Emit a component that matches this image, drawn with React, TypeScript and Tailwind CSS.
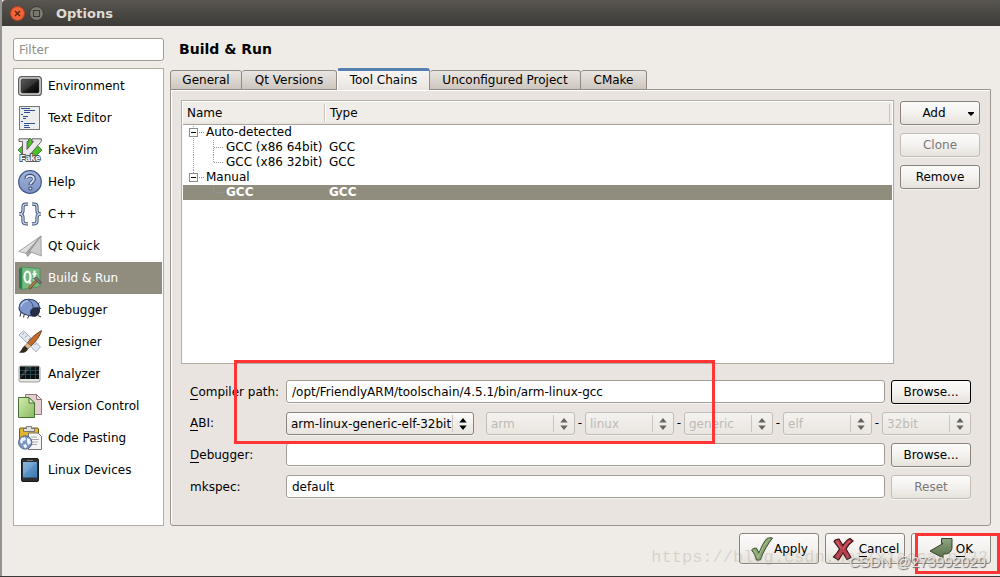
import React from "react";

const buttonBase =
  "flex items-center justify-center rounded-[3px] border bg-linear-to-b from-[#fcfbfa] via-[#f4f2ef] to-[#e6e2db] pt-px shadow-[0_1px_0_#f6f4f1]";
const fieldBase =
  "h-[23px] min-w-0 flex-1 self-start rounded-[3px] border border-[#a39d94] bg-white px-[5px] pt-px shadow-[0_1px_0_#f6f4f1] outline-none";

function EnvironmentIcon() {
  return (
    <svg width="24" height="24" viewBox="0 0 24 24">
      <defs>
        <linearGradient id="env" x1="0" y1="0" x2="1" y2="1">
          <stop offset="0" stopColor="#5a5a5a" />
          <stop offset=".5" stopColor="#343434" />
          <stop offset=".55" stopColor="#1c1c1c" />
          <stop offset="1" stopColor="#000" />
        </linearGradient>
      </defs>
      <rect x=".6" y="2.6" width="22.8" height="18.8" rx="3" fill="#d4d6d2" stroke="#5d5f5b" strokeWidth="1.2" />
      <rect x="3" y="5" width="18" height="14" rx="1.5" fill="url(#env)" stroke="#3a3a3a" strokeWidth=".6" />
    </svg>
  );
}

function TextEditorIcon() {
  return (
    <svg width="24" height="24" viewBox="0 0 24 24">
      <rect x="1.5" y=".5" width="20" height="23" fill="#eceeed" stroke="#777" />
      <path
        d="M3 2.5h9M6 4.500h11M6 6.500h6M3 8.500h2M5 10.500h5M5 12.500h3M3 15.500h2M6 17.500h11M6 19.500h5M6 21.500h6"
        stroke="#2f4f8f"
        strokeWidth="1"
      />
    </svg>
  );
}

function FakeVimIcon() {
  return (
    <svg width="24" height="24" viewBox="0 0 24 24">
      <path d="M12 0 24 12 12 24 0 12Z" fill="#4cc02a" stroke="#1e6a14" strokeWidth=".7" />
      <path
        d="M1 .8h9.500v2.700H9v8l6.500-8H14V.8h9.300v2.700L10 19H4.500V3.500H1Z"
        fill="#e9e9e9"
        stroke="#555"
        strokeWidth=".9"
      />
      <text
        x="12"
        y="22.500"
        textAnchor="middle"
        fontSize="9"
        fontWeight="bold"
        fontFamily="Liberation Sans, sans-serif"
        fill="#fff"
        stroke="#555"
        strokeWidth="1.800"
        paintOrder="stroke"
      >
        Fake
      </text>
    </svg>
  );
}

function HelpIcon() {
  return (
    <svg width="24" height="24" viewBox="0 0 24 24">
      <defs>
        <linearGradient id="help" x1="0" y1="0" x2="0" y2="1">
          <stop offset="0" stopColor="#a5b5d8" />
          <stop offset="1" stopColor="#7d92c4" />
        </linearGradient>
      </defs>
      <circle cx="12" cy="12" r="11.300" fill="url(#help)" stroke="#40588e" strokeWidth="1.200" />
      <path d="M8.200 8.700C8.400 4.500 16 4.500 16 9c0 3-3.600 3-3.600 6" fill="none" stroke="#344874" strokeWidth="3.600" />
      <circle cx="12.400" cy="18.500" r="2" fill="#344874" />
      <path d="M8.400 8.500C8.600 5 15.800 5 15.800 9c0 3-3.400 3-3.400 5.600" fill="none" stroke="#dfe6f4" strokeWidth="1.800" />
      <circle cx="12.400" cy="18.500" r="1.100" fill="#dfe6f4" />
    </svg>
  );
}

function CppIcon() {
  const d =
    "M10 2.200H8C5.800 2.200 5 3.500 5 5v3.500C5 10.500 3.800 12 1 12 3.800 12 5 13.500 5 15.500V19c0 1.500.8 2.800 3 2.800h2M14 2.200H16c2.200 0 3 1.300 3 2.800v3.500c0 2 1.200 3.500 4 3.500-2.800 0-4 1.500-4 3.500V19c0 1.500-.8 2.800-3 2.800h-2";
  return (
    <svg width="24" height="24" viewBox="0 0 24 24" fill="none">
      <path d={d} stroke="#3e4f73" strokeWidth="3.200" />
      <path d={d} stroke="#cbd7ee" strokeWidth="1.300" />
    </svg>
  );
}

function QtQuickIcon() {
  return (
    <svg width="24" height="24" viewBox="0 0 24 24" stroke="#888" strokeWidth=".7" strokeLinejoin="round">
      <path d="M23 2 .7 17.500l7.300 1.800Z" fill="#dedede" />
      <path d="M23 2 8 19.300l1.700 3.200L13 18.500Z" fill="#a9a9a9" />
      <path d="M23 2 11.500 17.500 23.300 22Z" fill="#cdcdcd" />
    </svg>
  );
}

function BuildRunIcon() {
  return (
    <svg width="24" height="24" viewBox="0 0 24 24">
      <path d="M1 2.500 4 1v22.500L1 22Z" fill="#267d4c" />
      <path d="M4 1 22 2.500v18L4 23.500Z" fill="#75ba80" stroke="#438e58" strokeWidth=".8" />
      <ellipse cx="9.500" cy="11" rx="3" ry="5.300" fill="none" stroke="#f2f8f6" strokeWidth="2.200" />
      <path d="M10.500 14.500 13 18M16.500 4.500V14q0 1.500 2 1.500M14.500 8h4" fill="none" stroke="#f2f8f6" strokeWidth="2" />
      <path d="M11 22.500 19 14" stroke="#70431f" strokeWidth="3" />
      <path d="M11 22.300 19 14" stroke="#bc8254" strokeWidth="1.500" />
      <path d="m15.500 12.500 3-1.500 5 5.500-1.500 1.500-2.500-2Z" fill="#777" stroke="#444" strokeWidth=".7" />
    </svg>
  );
}

function DebuggerIcon() {
  return (
    <svg width="24" height="24" viewBox="0 0 24 24">
      <path
        d="M3 14 2 18.500M6.500 15.500 5.500 19.500M11 17.500l-1.500 3M20 17.500l3 1.500M19.500 6.500l2-2M21.500 11l1.500-1"
        stroke="#333"
        strokeWidth="1"
        fill="none"
      />
      <path
        d="M1 10C1 4.500 5 1.200 10.500 1.200S20.500 4 21.500 9.500c.3 4-2 8.500-6 8.500C9 17.500 1.500 16 1 10Z"
        fill="#7f97cb"
        stroke="#2f416f"
        strokeWidth="1.100"
      />
      <path d="M9.500 1.500C14 4 15.500 7 15 10.500" stroke="#354a7d" fill="none" />
      <path d="M12 14.500c0-4 4.500-6 9-5 2 3 .5 7.500-3 9-3 .8-6-.5-6-4Z" fill="#252d47" />
      <path d="M3 8.500C4 5 7 3 10 3" stroke="#b3c3e4" fill="none" strokeWidth="1.500" />
    </svg>
  );
}

function DesignerIcon() {
  return (
    <svg width="24" height="24" viewBox="0 0 24 24">
      <path d="M1 5 5.500.8l17 16-4.500 5Z" fill="#e2e7f0" stroke="#929dae" strokeWidth=".8" />
      <path d="m6 3-1.500 1.500M9 5.500 7 7.500m5 1-1.500 1.500m4.500 1-2 2m5 .5-1.500 1.500" stroke="#8c98aa" />
      <path d="M23.700.5C19 3 12.500 8 9.500 13l3.500 3C18.500 11 22 6 23.700.5Z" fill="#c26b2a" stroke="#633010" strokeWidth=".8" />
      <path d="m9.500 13-3 3 3.500 3 3-3.500Z" fill="#dfb67e" stroke="#765" strokeWidth=".6" />
      <path d="M7 16c-3 .5-2.500 4-6 6.500 4 1 7.500 0 9-3.500Z" fill="#33291f" />
    </svg>
  );
}

function AnalyzerIcon() {
  return (
    <svg width="24" height="24" viewBox="0 0 24 24">
      <rect x="1" y="4" width="21" height="16" rx="2" fill="#e4e4e0" stroke="#888" strokeWidth=".8" />
      <rect x="2" y="4.500" width="19" height="12.500" fill="#0c1214" />
      <path d="M2 8.500h19M2 12.500h19M7.500 4.500V17M12.500 4.500V17M17.500 4.500V17" stroke="#2f5a60" strokeWidth=".7" />
      <path d="M2 17v-2L9 4.500h5Z" fill="#fff" opacity=".15" />
    </svg>
  );
}

function VersionIcon() {
  return (
    <svg width="24" height="24" viewBox="0 0 24 24">
      <defs>
        <linearGradient id="ver" x1="0" y1="0" x2="1" y2="1">
          <stop offset="0" stopColor="#d5ecb0" />
          <stop offset="1" stopColor="#86b95d" />
        </linearGradient>
      </defs>
      <path d="M7.500.5h11l5 5v15h-16Z" fill="#e5cfd0" stroke="#8d7778" />
      <path d="M18.500.5v5h5Z" fill="#f5e5e5" stroke="#8d7778" />
      <path d="M.5 3.500h10.500l5.500 5.500v14.500H.5Z" fill="url(#ver)" stroke="#477134" />
      <path d="M11 3.500V9h5.500Z" fill="#e3f3c9" stroke="#477134" />
    </svg>
  );
}

function PastingIcon() {
  return (
    <svg width="24" height="24" viewBox="0 0 24 24">
      <rect x="1.500" y="2" width="19" height="16" rx="1" fill="#dfb532" stroke="#765a18" />
      <path d="M5.500 5.500v-3h3V.5h5v2h3v3Z" fill="#ddd" stroke="#666" strokeWidth=".8" />
      <path d="M10.500 7h9.500l3.500 3.500v13h-13Z" fill="#f5f5f3" stroke="#777" />
      <path d="M13 11h6m-6 2.500h8m-8 2.500h7m-7 2.500h6" stroke="#aaa" />
      <circle cx="7.200" cy="16.500" r="6.700" fill="#7c96bd" stroke="#43587b" strokeWidth=".8" />
      <path d="m3 12 4-1 1 3-3 1-1 3-2-2Zm6 0 3 1 1 4-3 2-1-3Zm-4 7 3-1 1 3-2 1.500Z" fill="#eef3fa" />
    </svg>
  );
}

function DevicesIcon() {
  return (
    <svg width="24" height="24" viewBox="0 0 24 24">
      <defs>
        <linearGradient id="dev" x1="0" y1="0" x2="1" y2="1">
          <stop offset="0" stopColor="#76aedc" />
          <stop offset="1" stopColor="#3b78b0" />
        </linearGradient>
      </defs>
      <rect x="3.500" y=".5" width="17" height="23" rx="1.500" fill="#2b2e32" stroke="#17191b" />
      <rect x="5" y="4" width="14" height="15.500" fill="url(#dev)" />
      <path d="M5 4h14L5 17Z" fill="#fff" opacity=".12" />
      <path d="M9 2.500h6" stroke="#777" />
    </svg>
  );
}

const categories = [
  { name: "Environment", Icon: EnvironmentIcon },
  { name: "Text Editor", Icon: TextEditorIcon },
  { name: "FakeVim", Icon: FakeVimIcon },
  { name: "Help", Icon: HelpIcon },
  { name: "C++", Icon: CppIcon },
  { name: "Qt Quick", Icon: QtQuickIcon },
  { name: "Build & Run", Icon: BuildRunIcon, selected: true },
  { name: "Debugger", Icon: DebuggerIcon },
  { name: "Designer", Icon: DesignerIcon },
  { name: "Analyzer", Icon: AnalyzerIcon },
  { name: "Version Control", Icon: VersionIcon },
  { name: "Code Pasting", Icon: PastingIcon },
  { name: "Linux Devices", Icon: DevicesIcon },
];

const tabs = [
  { name: "General", width: "w-[72px]" },
  { name: "Qt Versions", width: "w-[95px]" },
  { name: "Tool Chains", width: "w-[93px]", active: true },
  { name: "Unconfigured Project", width: "w-[151px]" },
  { name: "CMake", width: "w-[66px]" },
];

type BranchKind = "first" | "middle" | "last" | "root" | "only";

function Branch({ kind }: { kind: BranchKind }) {
  const line = { stroke: "#999", strokeDasharray: "1 1", fill: "none" };
  if (kind === "first" || kind === "root") {
    return (
      <svg className="shrink-0" width="23" height="15" viewBox="0 0 23 15">
        <path d={kind === "first" ? "M10.500 1v2M10.500 13v2" : "M10.500 0v3"} {...line} />
        <path d="M16 7.500h5" {...line} />
        <rect x="6.500" y="3.500" width="8" height="8" fill="#fff" stroke="#8d8d8d" />
        <path d="M8 7.500h5" stroke="#000" />
      </svg>
    );
  }
  return (
    <svg className="shrink-0" width="43" height="15" viewBox="0 0 43 15">
      {kind !== "only" && <path d="M10.500 0v15" {...line} />}
      <path d={kind === "middle" ? "M30.500 0v15" : "M30.500 0v8"} {...line} />
      <path d="M31 7.500h9" {...line} />
    </svg>
  );
}

const rows: { name: string; type: string; kind: BranchKind; selected?: boolean }[] = [
  { name: "Auto-detected", type: "", kind: "first" },
  { name: "GCC (x86 64bit)", type: "GCC", kind: "middle" },
  { name: "GCC (x86 32bit)", type: "GCC", kind: "last" },
  { name: "Manual", type: "", kind: "root" },
  { name: "GCC", type: "GCC", kind: "only", selected: true },
];

function ToolChainTable() {
  return (
    <div className="min-w-0 flex-1 border border-[#b3ada6] bg-white p-px">
      <table className="w-full table-fixed border-separate border-spacing-0">
        <thead>
          <tr className="h-[23px] bg-linear-to-b from-[#f0ede9] from-80% to-[#e5e0da] text-left">
            <th className="w-[142px] border-b border-[#a9a39b] p-0 font-normal">
              <div className="flex h-[18px] items-center border-r border-[#c8c3bc] pt-px pl-1">Name</div>
            </th>
            <th className="border-b border-[#a9a39b] p-0 pr-[2px] font-normal">
              <div className="flex h-[18px] items-center border-r border-l border-r-[#c8c3bc] border-l-white pt-px pl-1">
                Type
              </div>
            </th>
          </tr>
        </thead>
        <tbody>
          {rows.map((row, i) => (
            <tr key={i} className={row.selected ? "h-[15px] bg-[#918d7e] font-bold text-white" : "h-[15px]"}>
              <td className="p-0">
                <div className="flex h-[15px] items-center whitespace-nowrap">
                  <Branch kind={row.kind} />
                  {row.name}
                </div>
              </td>
              <td className="p-0 pl-1 leading-[15px]">{row.type}</td>
            </tr>
          ))}
        </tbody>
      </table>
    </div>
  );
}

function Combo({ value, label, disabled }: { value: string; label: string; disabled?: boolean }) {
  return (
    <span
      className={
        disabled
          ? "relative flex h-[23px] min-w-0 flex-1 rounded-[3px] border border-[#c2bdb6] bg-linear-to-b from-[#f4f2ef] to-[#eae6e1] text-[#bdbab5] shadow-[0_1px_0_#f3f0ed]"
          : "relative flex h-[23px] w-[188px] shrink-0 rounded-[3px] border border-[#8a857c] bg-linear-to-b from-[#fcfbfa] to-[#e8e4de] shadow-[0_1px_0_#f6f4f1]"
      }
    >
      <select
        aria-label={label}
        disabled={disabled}
        className="w-full min-w-0 appearance-none bg-transparent pt-px pl-1 opacity-100 outline-none"
      >
        <option>{value}</option>
      </select>
      <span className="pointer-events-none absolute inset-y-[2px] right-0 flex w-[21px] items-center justify-center border-l border-[#cbc6bf]">
        <svg width="8" height="12" viewBox="0 0 8 12" fill={disabled ? "#666460" : "#000"}>
          <path d="M4 0 7.700 4.500H.3ZM4 12 .3 7.500h7.400Z" />
        </svg>
      </span>
    </span>
  );
}

function Label({ text, htmlFor, mnemonic }: { text: string; htmlFor: string; mnemonic?: boolean }) {
  return (
    <label htmlFor={htmlFor} className="w-24 shrink-0">
      {mnemonic ? (
        <>
          <span className="border-b border-black">{text[0]}</span>
          {text.slice(1)}
        </>
      ) : (
        text
      )}
    </label>
  );
}

function ToolChainForm() {
  const browse = "ml-1.5 h-6 w-20 shrink-0";
  return (
    <div className="relative mt-4 flex flex-col gap-2 px-[9px]">
      <div className="flex h-6 items-center">
        <Label text="Compiler path:" htmlFor="compiler" mnemonic />
        <input id="compiler" className={fieldBase} defaultValue="/opt/FriendlyARM/toolschain/4.5.1/bin/arm-linux-gcc" />
        <button className={`${buttonBase} ${browse} border-black`}>Browse...</button>
      </div>
      <div className="flex h-[23px] items-center">
        <span className="w-24 shrink-0">
          <span className="border-b border-black">A</span>BI:
        </span>
        <Combo label="ABI" value="arm-linux-generic-elf-32bit" />
        <span className="w-3 shrink-0" />
        {["arm", "linux", "generic", "elf", "32bit"].map((part, i) => (
          <React.Fragment key={part}>
            {i > 0 && <span className="w-2.5 shrink-0 text-center">-</span>}
            <Combo label={`ABI ${part}`} value={part} disabled />
          </React.Fragment>
        ))}
      </div>
      <div className="flex h-6 items-center">
        <Label text="Debugger:" htmlFor="debugger" mnemonic />
        <input id="debugger" className={fieldBase} />
        <button className={`${buttonBase} ${browse} border-[#8a857c]`}>Browse...</button>
      </div>
      <div className="flex h-6 items-center">
        <Label text="mkspec:" htmlFor="mkspec" />
        <input id="mkspec" className={fieldBase} defaultValue="default" />
        <button disabled className={`${buttonBase} ${browse} border-[#c2bdb6] text-[#7b7875]`}>
          Reset
        </button>
      </div>
      <div className="pointer-events-none absolute -top-5 left-[53px] h-[84px] w-[481px] border-3 border-[#ff3535]" />
    </div>
  );
}

function Footer() {
  const action = "h-[31px] w-20 border-[#8a857c]";
  return (
    <footer className="relative flex justify-end gap-1.5 pt-[7px] pr-[9px] pb-3">
      <button className={`${buttonBase} ${action}`}>
        <svg width="24" height="24" viewBox="0 0 24 24">
          <path
            d="M1.500 13c1.500-1.500 3-2 5-1.800L9 16C11.500 9.500 14 4.500 17 1.500c2-.8 3.500-1 5.500-.5C18 7 13.500 14 10.500 22.500c-1.500.8-3 .8-4 .5C5.500 19 4 16 1.500 13Z"
            fill="#86a66f"
            stroke="#3a4d30"
          />
          <path d="M4 13 8 20.500C11 13 14 7 19.500 2" fill="none" stroke="#a9c193" />
        </svg>
        Apply
      </button>
      <button className={`${buttonBase} ${action}`}>
        <svg className="mr-1" width="24" height="24" viewBox="0 0 24 24">
          <path
            d="M3 4.500C4 2.500 6 2 8 2l4 6.500C14 5 16.500 2.500 19 1.500l3 2.500c-3 2-5.500 5-7 8l5 8.500-4 2-4-6.500c-2 3-3 5-4.500 7L2.500 20c2.500-2.500 4.500-5 6-8Z"
            fill="#bb3f4b"
            stroke="#3d1519"
            strokeWidth="1.200"
          />
          <path d="M5.500 4.500 10 11.500M19 4C16 6 13.500 9 12 12" fill="none" stroke="#d4737b" />
        </svg>
        <span>
          <span className="border-b border-black">C</span>ancel
        </span>
      </button>
      <button className={`${buttonBase} ${action}`}>
        <svg className="mr-[3px]" width="24" height="24" viewBox="0 0 24 24">
          <defs>
            <linearGradient id="enter" x1="0" y1="0" x2="0" y2="1">
              <stop offset="0" stopColor="#8fa57f" />
              <stop offset="1" stopColor="#566e4a" />
            </linearGradient>
          </defs>
          <path
            d="M12.500 1.500H23v8.500c0 4-2.500 7-7 7h-2V21L1 14l13-7.500h-1.500Z"
            fill="url(#enter)"
            stroke="#35432f"
            strokeLinejoin="round"
          />
        </svg>
        <span>
          <span className="border-b border-black">O</span>K
        </span>
      </button>
      <div className="pointer-events-none absolute top-[22px] right-[12px] font-['Liberation_Mono',monospace] text-[17px] leading-5 whitespace-nowrap text-[#8c8678]/25">
        https://blog.csdn.net/xiaocain322
      </div>
      <div className="pointer-events-none absolute right-0 bottom-[2px] h-[41px] w-[85px] border-3 border-[#ff3535]" />
      <div className="pointer-events-none absolute right-[14px] bottom-[5px] font-['Liberation_Sans',sans-serif] text-[15px] leading-[18px] whitespace-nowrap text-[#e4e2de] [text-shadow:1px_1px_1px_#666]">
        CSDN @273992029
      </div>
    </footer>
  );
}

export default function App() {
  return (
    <div className="flex min-h-screen flex-col border-b border-[#3b3a38] bg-[#efece7] font-['DejaVu_Sans',sans-serif] text-[12px] leading-[15px] text-black">
      <div className="flex flex-1 flex-col border-l-2 border-[#969492]">
        <header className="flex h-[26px] items-center rounded-tl-[4px] bg-linear-to-b from-[#595650] to-[#3c3b37] pl-2">
          <button aria-label="Close" className="mr-1">
            <svg width="15" height="15" viewBox="0 0 15 15">
              <circle cx="7.500" cy="7.500" r="7" fill="#ef6438" stroke="#b53f1c" />
              <path d="m5 5 5 5m0-5-5 5" stroke="#5e2313" strokeWidth="1.300" />
            </svg>
          </button>
          <button aria-label="Maximize" className="mr-3">
            <svg width="15" height="15" viewBox="0 0 15 15">
              <circle cx="7.500" cy="7.500" r="7" fill="#7b786f" stroke="#37352f" />
              <rect x="4.500" y="4.500" width="6" height="6" fill="none" stroke="#3a3934" />
            </svg>
          </button>
          <h1 className="text-[13px] font-bold text-[#dfdbd2]">Options</h1>
        </header>
        <main className="flex flex-1 gap-1.5 pt-3 pr-[9px] pl-[11px]">
          <aside className="flex w-[151px] shrink-0 flex-col gap-[7px]">
            <input
              aria-label="Filter"
              placeholder="Filter"
              className="h-[23px] w-full rounded-[3px] border border-[#a39d94] bg-white px-[5px] outline-none placeholder:text-[#8f8d8a]"
            />
            <ul className="flex-1 border border-[#b3ada6] bg-white px-px pt-px">
              {categories.map(({ name, Icon, selected }) => (
                <li key={name}>
                  <button
                    className={
                      selected
                        ? "flex h-8 w-full items-center gap-1.5 bg-[#918d7e] pl-[3px] text-white"
                        : "flex h-8 w-full items-center gap-1.5 pl-[3px]"
                    }
                  >
                    <Icon />
                    <span className="pt-px">{name}</span>
                  </button>
                </li>
              ))}
            </ul>
          </aside>
          <section className="flex min-w-0 flex-1 flex-col">
            <h2 className="mb-[7px] flex h-[23px] items-center pl-[9px] text-[14px] font-bold">Build &amp; Run</h2>
            <div role="tablist" className="relative flex h-[22px] items-end">
              {tabs.map((tab) => (
                <button
                  key={tab.name}
                  role="tab"
                  aria-selected={!!tab.active}
                  className={
                    tab.active
                      ? `h-[22px] ${tab.width} rounded-t-[3px] border-t-3 border-r border-l border-t-[#5480b0] border-r-[#918b83] border-l-white bg-linear-to-b from-[#f7f5f3] to-[#e9e4e0]`
                      : `h-5 ${tab.width} rounded-t-[3px] border border-l-0 border-[#918b83] bg-linear-to-b from-[#e9e5e1] to-[#cdc6be] pt-px first:border-l`
                  }
                >
                  {tab.name}
                </button>
              ))}
            </div>
            <div className="-mt-px flex flex-1 flex-col rounded-b-[3px] border border-[#9b958d] bg-[#e9e4e0] p-2.5 pb-[26px] shadow-[inset_1px_1px_0_#fff]">
              <div className="flex flex-1 gap-1.5">
                <ToolChainTable />
                <div className="flex w-20 shrink-0 flex-col gap-2 pt-px">
                  <button className={`${buttonBase} h-6 gap-[22px] border-[#8a857c] pl-4`}>
                    Add
                    <svg width="6" height="4" viewBox="0 0 6 4">
                      <path d="M0 0h6v1L3 4 0 1Z" />
                    </svg>
                  </button>
                  <button disabled className={`${buttonBase} h-6 border-[#c2bdb6] text-[#7b7875]`}>
                    Clone
                  </button>
                  <button className={`${buttonBase} h-6 border-[#8a857c]`}>Remove</button>
                </div>
              </div>
              <ToolChainForm />
            </div>
          </section>
        </main>
        <Footer />
      </div>
    </div>
  );
}
